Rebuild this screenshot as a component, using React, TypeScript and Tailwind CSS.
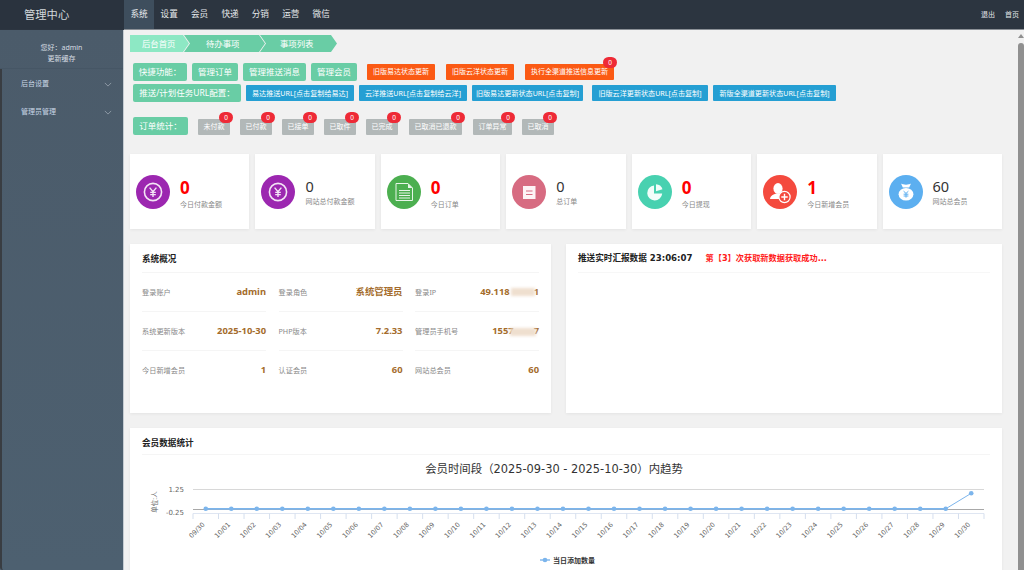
import React from "react";

const FONT = "font-['Noto_Sans','Noto_Sans_CJK_SC',sans-serif]";

function Yen() {
  return (
    <svg viewBox="0 0 34 34" className="w-[34px] h-[34px]">
      <circle cx="17" cy="17" r="17" fill="#9c27b0" />
      <circle cx="17" cy="17" r="8.6" fill="none" stroke="#f3e5f5" strokeWidth="1.6" />
      <path d="M13.6 12.6 17 16.6 20.4 12.6M17 16.6V22M14.2 17.4H19.8M14.2 19.6H19.8" fill="none" stroke="#f3e5f5" strokeWidth="1.4" />
    </svg>
  );
}
function Doc() {
  return (
    <svg viewBox="0 0 34 34" className="w-[34px] h-[34px]">
      <circle cx="17" cy="17" r="17" fill="#4caf50" />
      <path d="M9 8.5H21L25.5 13V25.5H9Z" fill="none" stroke="#e8f5e9" strokeWidth="1" />
      <path d="M21 8.5V13H25.5Z" fill="#e8f5e9" />
      <path d="M12 15.5H23M12 18H23M12 20.5H23M12 23H23" stroke="#e8f5e9" strokeWidth="1" />
    </svg>
  );
}
function Note() {
  return (
    <svg viewBox="0 0 34 34" className="w-[34px] h-[34px]">
      <circle cx="17" cy="17" r="17" fill="#d76b81" />
      <rect x="11" y="11" width="12.5" height="13" fill="#fdf3f5" />
      <path d="M14 16H20.5M14 19.5H20.5" stroke="#d76b81" strokeWidth="1.2" />
    </svg>
  );
}
function Pie() {
  return (
    <svg viewBox="0 0 34 34" className="w-[34px] h-[34px]">
      <circle cx="17" cy="17" r="17" fill="#48d1b0" />
      <path d="M16 10.5A7.5 7.5 0 1 0 24.2 18.6H16Z" fill="#f2fdfa" />
      <path d="M18 9.2V16.2L24.5 14.2A7.2 7.2 0 0 0 18 9.2Z" fill="#f2fdfa" />
    </svg>
  );
}
function AddUser() {
  return (
    <svg viewBox="0 0 34 34" className="w-[34px] h-[34px]">
      <circle cx="17" cy="17" r="17" fill="#f44a3e" />
      <ellipse cx="15" cy="13.5" rx="4.6" ry="5.4" fill="#fff" />
      <path d="M7 24C7.5 20.5 10.5 19.5 13 18.5H17C19 19.5 20 20.5 20 24Z" fill="#fff" />
      <circle cx="21.5" cy="22" r="5.6" fill="#f44a3e" stroke="#fff" strokeWidth="1.2" />
      <path d="M21.5 18.8V25.2M18.3 22H24.7" stroke="#fff" strokeWidth="1.4" />
    </svg>
  );
}
function Bag() {
  return (
    <svg viewBox="0 0 34 34" className="w-[34px] h-[34px]">
      <circle cx="17" cy="17" r="17" fill="#5caff0" />
      <path d="M12 8.5C14 10 20 10 22 8.5L20.2 12.4H13.8Z" fill="#fff" />
      <ellipse cx="17" cy="19.2" rx="7.4" ry="6.3" fill="#fff" />
      <path d="M14.6 16.2 17 18.4 19.4 16.2M17 18.4V22.6M14.6 19.2H19.4M14.6 21H19.4" fill="none" stroke="#5caff0" strokeWidth="1" />
    </svg>
  );
}

const cards = [
  { icon: <Yen />, v: "0", l: "今日付款金额", hot: true },
  { icon: <Yen />, v: "0", l: "网站总付款金额", hot: false },
  { icon: <Doc />, v: "0", l: "今日订单", hot: true },
  { icon: <Note />, v: "0", l: "总订单", hot: false },
  { icon: <Pie />, v: "0", l: "今日提现", hot: true },
  { icon: <AddUser />, v: "1", l: "今日新增会员", hot: true },
  { icon: <Bag />, v: "60", l: "网站总会员", hot: false },
];

const stats = [
  { t: "未付款", w: "w-[32px]", ml: "ml-[10px]" },
  { t: "已付款", w: "w-[32px]", ml: "ml-[10px]" },
  { t: "已接单", w: "w-[32px]", ml: "ml-[10px]" },
  { t: "已取件", w: "w-[32px]", ml: "ml-[10px]" },
  { t: "已完成", w: "w-[32px]", ml: "ml-[10px]" },
  { t: "已取消已退款", w: "w-[53px]", ml: "ml-[11px]" },
  { t: "订单异常", w: "w-[39px]", ml: "ml-[11px]" },
  { t: "已取消", w: "w-[32px]", ml: "ml-[10px]" },
];

const blue = [
  { t: "易达推送URL[点击复制给易达]", w: "w-[108px]" },
  { t: "云洋推送URL[点击复制给云洋]", w: "w-[108px]" },
  { t: "旧版易达更新状态URL[点击复制]", w: "w-[111px]" },
  { t: "旧版云洋更新状态URL[点击复制]", w: "w-[116px]" },
  { t: "新版全渠道更新状态URL[点击复制]", w: "w-[123px]" },
];

const overview = [
  ["登录账户", "admin", "登录角色", "系统管理员", "登录IP", "49.118"],
  ["系统更新版本", "2025-10-30", "PHP版本", "7.2.33", "管理员手机号", "1557"],
  ["今日新增会员", "1", "认证会员", "60", "网站总会员", "60"],
];

const Green = ({ children, w }: { children: React.ReactNode; w: string }) => (
  <span className={`${w} h-[18px] shrink-0 rounded-[2px] bg-[#69cda5] text-white text-[8.5px] leading-[18px] text-center whitespace-nowrap`}>
    {children}
  </span>
);

function Badge() {
  return (
    <span className="absolute -top-[7px] right-[-3px] w-[14px] h-[11px] rounded-full bg-[#ee2a36] text-white text-[6.5px] leading-[11px] text-center">
      0
    </span>
  );
}

const Dates = (() => {
  const out = ["09/30"];
  for (let i = 1; i <= 30; i++) out.push(`10/${String(i).padStart(2, "0")}`);
  return out;
})();

function Chart() {
  const left = 193;
  const right = 984;
  const step = (right - left) / 31;
  const X = (i: number) => left + step * (i + 0.5);
  const offX = 130;
  const offY = 455;
  const pts = Dates.map((_, i) => `${X(i) - offX},${i === 30 ? 493.3 - offY : 508.8 - offY}`);
  return (
    <svg viewBox="0 0 872 115" className="w-[872px] h-[115px] block">
      <text x={554 - offX} y={473 - offY} textAnchor="middle" fontSize="11.4" fill="#333" fontFamily="'DejaVu Sans','Noto Sans CJK SC',sans-serif">
        会员时间段（2025-09-30 - 2025-10-30）内趋势
      </text>
      <path d={`M${970.5 - offX} 467.5H${983.5 - offX}M${970.5 - offX} 471H${983.5 - offX}M${970.5 - offX} 474.5H${983.5 - offX}`} stroke="#555" strokeWidth="1.6" />
      <text transform={`translate(${157 - offX} ${502 - offY}) rotate(-90)`} textAnchor="middle" fontSize="6.5" fill="#666" fontFamily="'Noto Sans CJK SC',sans-serif">单位:人</text>
      <text x={184 - offX} y={492 - offY} textAnchor="end" fontSize="7" fill="#666" fontFamily="'DejaVu Sans',sans-serif">1.25</text>
      <text x={184 - offX} y={515 - offY} textAnchor="end" fontSize="7" fill="#666" fontFamily="'DejaVu Sans',sans-serif">-0.25</text>
      <line x1={left - offX} x2={right - offX} y1={489.5 - offY} y2={489.5 - offY} stroke="#d8d8d8" />
      <line x1={left - offX} x2={right - offX} y1={509.5 - offY} y2={509.5 - offY} stroke="#a8a8a8" />
      <line x1={left - offX} x2={right - offX} y1={513.5 - offY} y2={513.5 - offY} stroke="#dfe6f2" />
      {Array.from({ length: 32 }).map((_, i) => (
        <line key={i} x1={left + step * i - offX} x2={left + step * i - offX} y1={513.5 - offY} y2={519 - offY} stroke="#d5dfee" />
      ))}
      <polyline points={pts.slice(0, 30).join(" ")} fill="none" stroke="#7cb5ec" strokeWidth="1.8" />
      <polyline points={pts.slice(29).join(" ")} fill="none" stroke="#7cb5ec" strokeWidth="1" />
      {Dates.map((_, i) => (
        <circle key={i} cx={X(i) - offX} cy={i === 30 ? 493.3 - offY : 508.8 - offY} r="2.3" fill="#7cb5ec" />
      ))}
      {Dates.map((d, i) => (
        <text key={d} transform={`translate(${X(i) - offX - 0.5} ${525 - offY}) rotate(-45)`} textAnchor="end" fontSize="6.6" fill="#666" fontFamily="'DejaVu Sans',sans-serif">
          {d}
        </text>
      ))}
      <line x1={540 - offX} x2={550 - offX} y1={560 - offY} y2={560 - offY} stroke="#7cb5ec" strokeWidth="1.4" />
      <circle cx={545 - offX} cy={560 - offY} r="2.3" fill="#7cb5ec" />
      <text x={553 - offX} y={563 - offY} fontSize="7" fontWeight="700" fill="#333" fontFamily="'Noto Sans CJK SC',sans-serif">当日添加数量</text>
    </svg>
  );
}

export default function App() {
  return (
    <div className={`${FONT} w-[1024px] h-[570px] overflow-hidden flex flex-col bg-[#f1f1f1]`}>
      <header className="h-[30px] shrink-0 flex bg-[#2c3540]">
        <div className="w-[124px] h-[29px] bg-[#2a333e] text-[#d3d8dc] text-[11.3px] leading-[29px] pl-[24px]">管理中心</div>
        <div className="flex-1 flex h-[30px] border-b border-[#8b9096]">
          <nav className="flex h-[29px] text-[8.6px] leading-[29px] text-[#e7eaed]">
            {["系统", "设置", "会员", "快递", "分销", "运营", "微信"].map((n, i) => (
              <span key={n} className={i === 0 ? "w-[30px] text-center bg-[#3e4e5d]" : "w-[30.4px] text-center"}>
                {n}
              </span>
            ))}
          </nav>
          <div className="ml-auto flex gap-[10px] pr-[5px] text-[7px] leading-[29px] text-[#e3e6e9]">
            <span>退出</span>
            <span>首页</span>
          </div>
        </div>
      </header>

      <div className="flex-1 flex min-h-0">
        <aside className="w-[124px] shrink-0 bg-gradient-to-b from-[#4b5b6a] to-[#4d6070] border-r border-[#c5ccd2] text-[#d6dce2] text-[7px] flex flex-col">
          <div className="h-[39px] border-b border-[#465665] text-center pt-[12px] leading-[11px]">
            <div>您好：admin</div>
            <div>更新缓存</div>
          </div>
          <div className="flex-1 border-l-2 border-[#393d42] rounded-bl-[3px] pt-[1px]">
            {["后台设置", "管理员管理"].map((t) => (
              <div key={t} className="h-[28px] flex items-center justify-between pl-[19px] pr-[11px] text-[#c9d6e6]">
                <span>{t}</span>
                <svg viewBox="0 0 10 6" className="w-[8px] h-[5px]">
                  <path d="M1 1 5 5 9 1" fill="none" stroke="#a5b0ba" strokeWidth="0.9" />
                </svg>
              </div>
            ))}
          </div>
        </aside>

        <main className="flex-1 min-w-0 overflow-hidden pl-[6px] pr-[10px] pt-[5px]">
          <div className="flex h-[17px] text-[8.4px] leading-[17px] text-white">
            <span className="w-[59px] bg-[#8de8c4] pl-[12px] [clip-path:polygon(0_0,53px_0,100%_50%,53px_100%,0_100%)]">后台首页</span>
            <span className="w-[81px] -ml-[5px] bg-[#69cda5] pl-[22px] [clip-path:polygon(0_0,75px_0,100%_50%,75px_100%,0_100%,6px_50%)]">待办事项</span>
            <span className="w-[77px] -ml-[5px] bg-[#69cda5] pl-[20px] [clip-path:polygon(0_0,71px_0,100%_50%,71px_100%,0_100%,6px_50%)]">事项列表</span>
          </div>

          <div className="ml-[3px] mt-[11px] flex h-[18px] items-center">
            <Green w="w-[54px]">快捷功能：</Green>
            <Green w="ml-[5px] w-[46px]">管理订单</Green>
            <Green w="ml-[5px] w-[63px]">管理推送消息</Green>
            <Green w="ml-[5px] w-[46px]">管理会员</Green>
            {[
              { t: "旧版易达状态更新", w: "w-[68px]", ml: "ml-[10px]" },
              { t: "旧版云洋状态更新", w: "w-[68px]", ml: "ml-[11px]" },
              { t: "执行全渠道推送信息更新", w: "w-[89px]", ml: "ml-[11px]" },
            ].map((b, i) => (
              <span key={b.t} className={`${b.ml} ${b.w} relative h-[16px] rounded-[1px] bg-[#fb5a14] text-white text-[7px] leading-[16px] text-center whitespace-nowrap`}>
                {b.t}
                {i === 2 && <Badge />}
              </span>
            ))}
          </div>

          <div className="ml-[3px] mt-[3px] flex h-[18px] items-center">
            <Green w="w-[108px]">推送/计划任务URL配置：</Green>
            {blue.map((b, i) => (
              <span key={b.t} className={`${i === 3 ? "ml-[9px]" : "ml-[5px]"} ${b.w} h-[16px] rounded-[1px] bg-[#259fd3] text-white text-[7.1px] leading-[16px] text-center whitespace-nowrap`}>
                {b.t}
              </span>
            ))}
          </div>

          <div className="ml-[3px] mt-[15px] flex h-[18px] items-end">
            <Green w="w-[55px]">订单统计：</Green>
            {stats.map((s) => (
              <span key={s.t} className={`${s.ml} ${s.w} relative h-[16px] rounded-[1px] bg-[#b2b8b8] text-white text-[7px] leading-[16px] text-center whitespace-nowrap`}>
                {s.t}
                <Badge />
              </span>
            ))}
          </div>

          <div className="mt-[19px] grid grid-cols-7 gap-[6px] w-[872px]">
            {cards.map((c, i) => (
              <div key={i} className="h-[75px] bg-white shadow-[0_1px_3px_rgba(0,0,0,0.06)] flex items-center pl-[6px]">
                <div className="shrink-0 w-[34px] h-[34px] mt-[1px]">{c.icon}</div>
                <div className={c.hot ? "ml-[10px] mt-[4px]" : "ml-[10px] -mt-[1px]"}>
                  <div className={c.hot ? "text-[#ff0000] text-[17px] font-bold leading-[20px]" : "text-[#333] text-[14.5px] leading-[20px]"}>{c.v}</div>
                  <div className={`text-[#888] text-[7px] leading-[10px] whitespace-nowrap ${c.hot ? "mt-[2px]" : "mt-[1px]"}`}>{c.l}</div>
                </div>
              </div>
            ))}
          </div>

          <div className="mt-[15px] flex gap-[15px] w-[872px]">
            <section className="w-[421px] h-[169px] bg-white px-[12px] shadow-[0_1px_3px_rgba(0,0,0,0.06)]">
              <h3 className="h-[29px] border-b border-[#f5f5f5] text-[8.6px] font-bold leading-[31px] text-[#222]">系统概况</h3>
              <div className="grid grid-cols-3 gap-x-[12.5px]">
                {overview.map((row, r) =>
                  [0, 2, 4].map((k) => (
                    <div key={`${r}${k}`} className={`relative h-[39px] flex items-center justify-between ${r < 2 ? "border-b border-[#f5f5f5]" : ""}`}>
                      <span className="text-[7.2px] text-[#888]">{row[k]}</span>
                      <span className="text-[9.4px] font-bold text-[#a46c2c]">
                        {row[k + 1]}
                        {k === 4 && r === 0 && <span className="inline-block w-[24px]" />}
                        {k === 4 && r === 0 && "1"}
                        {k === 4 && r === 1 && <span className="inline-block w-[20px]" />}
                        {k === 4 && r === 1 && "7"}
                      </span>
                      {k === 4 && r === 0 && <span className="absolute right-[4px] top-[15px] w-[24px] h-[8px] bg-[#efdfcf] blur-[1.5px]" />}
                      {k === 4 && r === 1 && <span className="absolute right-[3px] top-[16px] w-[26px] h-[8px] bg-[#efdfcf] blur-[1.5px]" />}
                    </div>
                  ))
                )}
              </div>
            </section>
            <section className="w-[436px] h-[169px] bg-white px-[12px] shadow-[0_1px_3px_rgba(0,0,0,0.06)]">
              <h3 className="h-[29px] border-b border-[#f7f7f7] flex items-center whitespace-nowrap font-['DejaVu_Sans','Noto_Sans_CJK_SC',sans-serif] text-[8.6px] font-bold text-[#222]">
                推送实时汇报数据 23:06:07
                <span className="ml-[13px] text-[#ff1a1a] text-[8.2px]">第【3】次获取新数据获取成功...</span>
              </h3>
            </section>
          </div>

          <section className="mt-[15px] w-[872px] h-[160px] bg-white shadow-[0_1px_3px_rgba(0,0,0,0.06)]">
            <div className="mx-[12px]">
              <h3 className="h-[27px] border-b border-[#f5f5f5] text-[8.6px] font-bold leading-[31px] text-[#222]">会员数据统计</h3>
            </div>
            <Chart />
          </section>
        </main>

        <div className="w-[12px] shrink-0 relative bg-[#f1f1f1] flex flex-col items-center pt-[4px]">
          <span className="w-0 h-0 border-x-[3px] border-x-transparent border-b-[4px] border-b-[#8f8f8f] ml-[5px]" />
          <span className="mt-[5px] ml-[5px] w-[6px] flex-1 rounded-t-[3px] bg-[#909090]" />
        </div>
      </div>
    </div>
  );
}
